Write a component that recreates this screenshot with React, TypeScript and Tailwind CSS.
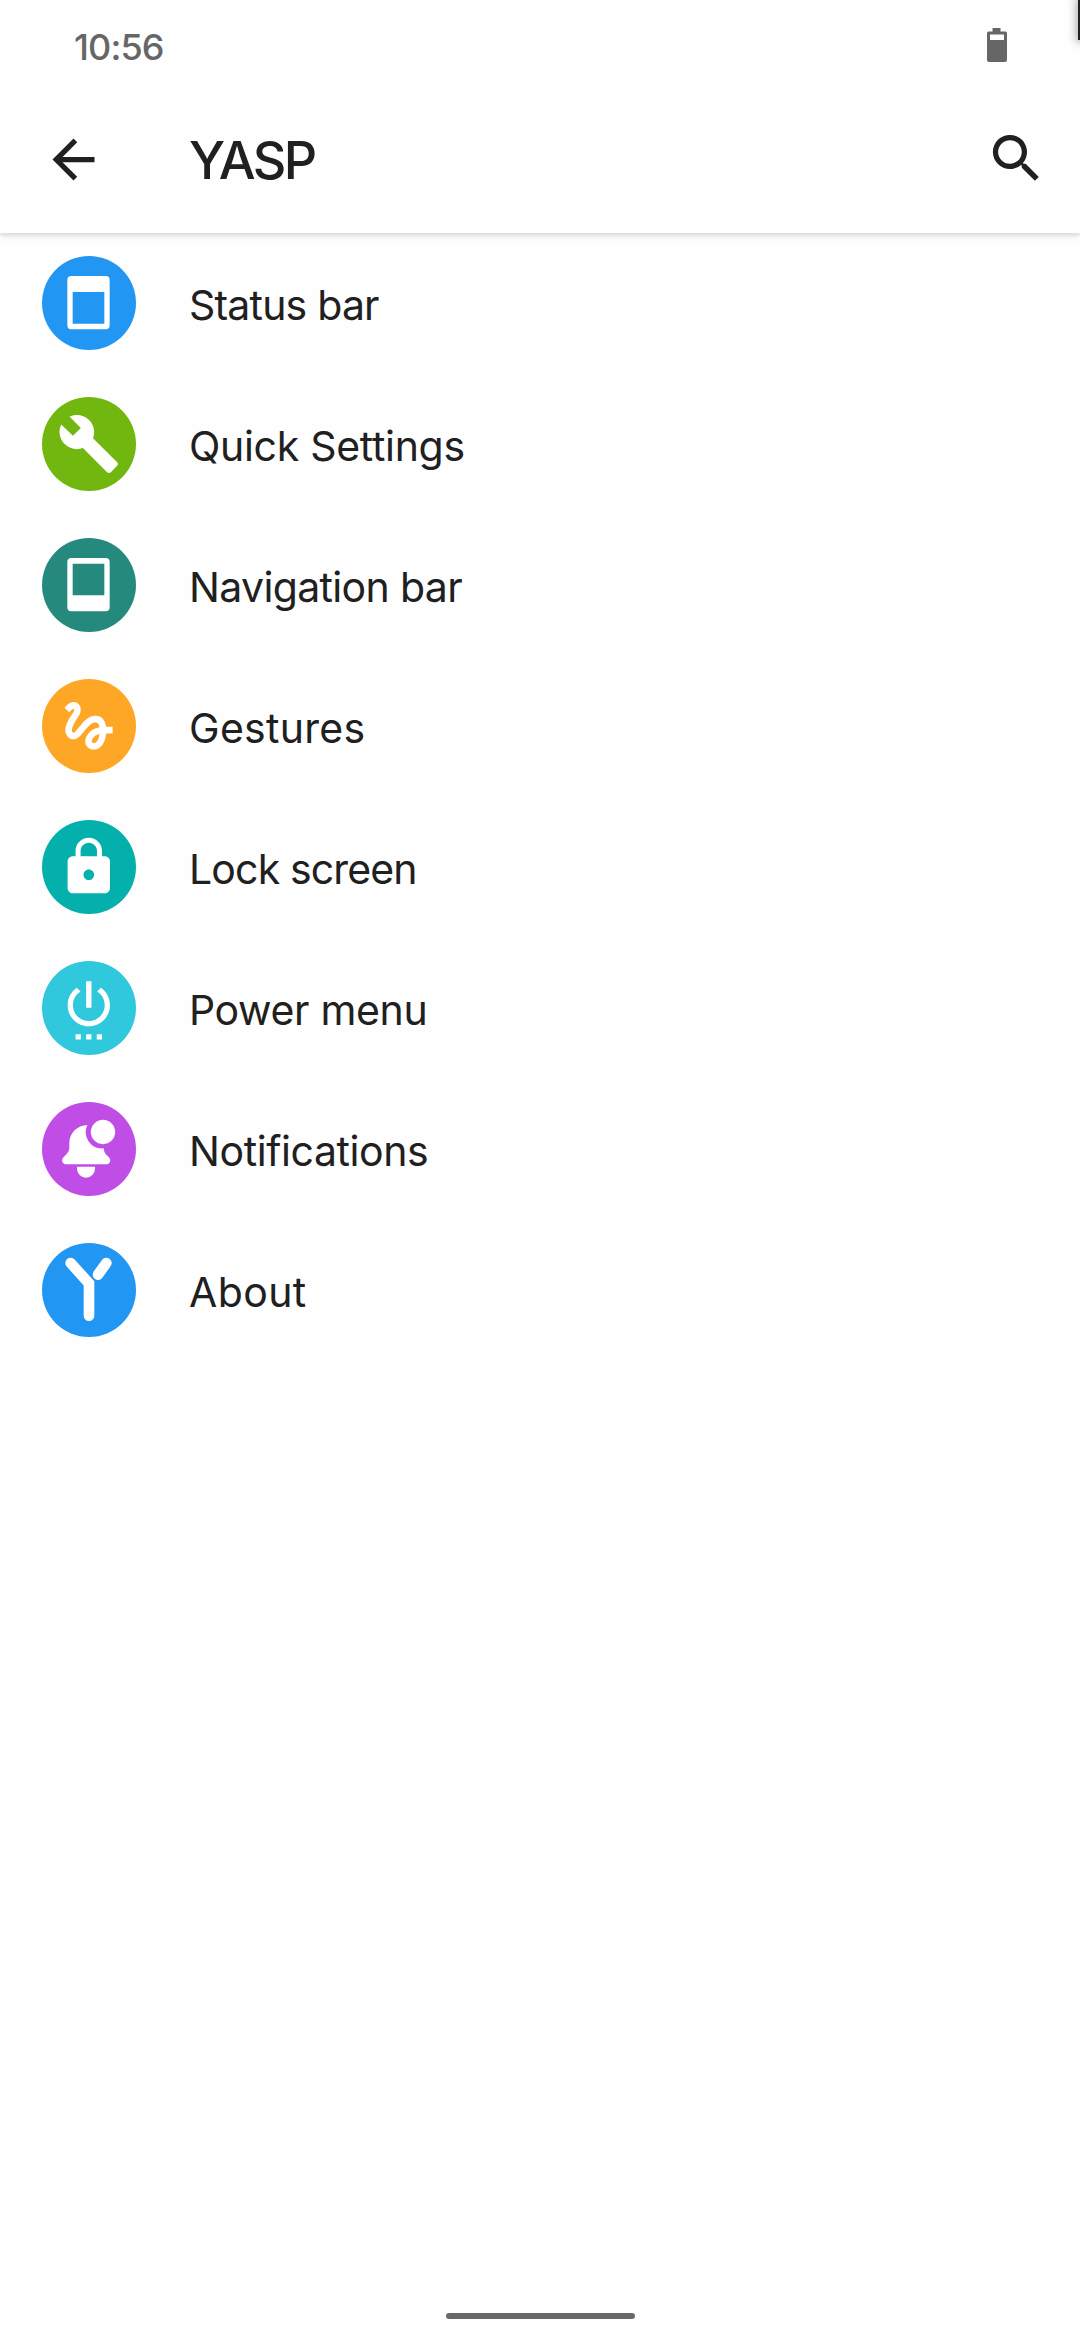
import type { ReactNode } from "react";
import { MdArrowBack, MdBuild, MdGesture, MdLock, MdSearch, MdSettingsPower } from "react-icons/md";

const glyph = "mr-px size-[63.6px] text-white";

function StatusBarIcon() {
  return (
    <svg viewBox="0 0 282 282" className="size-full" fill="#fff">
      <path fillRule="evenodd" d="M88 60H191a12 12 0 0 1 12 12V208a12 12 0 0 1-12 12H88a12 12 0 0 1-12-12V72a12 12 0 0 1 12-12ZM92 108V203H187V108Z" />
    </svg>
  );
}

function NavigationBarIcon() {
  return (
    <svg viewBox="0 0 282 282" className="size-full" fill="#fff">
      <path fillRule="evenodd" d="M88 60H191a12 12 0 0 1 12 12V208a12 12 0 0 1-12 12H88a12 12 0 0 1-12-12V72a12 12 0 0 1 12-12ZM92 77V172H187V77Z" />
    </svg>
  );
}

function BellIcon() {
  return (
    <svg viewBox="0 0 282 282" className="size-full" fill="#fff">
      <path d="M136 69C106 70 82 92 82 124V138Q82 148 74 156L65 165C56 174 61 187 73 187H192C205 187 209 174 200 165L191 156Q186 150 185 139A49 49 0 0 1 136 69Z" />
      <circle cx="183" cy="90" r="36.5" />
      <path d="M105 194H159V200A27 27 0 0 1 105 200Z" />
    </svg>
  );
}

function YaspIcon() {
  return (
    <svg viewBox="0 0 282 282" className="size-full" fill="none" stroke="#fff" strokeWidth="32" strokeLinecap="round">
      <path d="M86 60L141 121V218" />
      <path d="M193 60L168 95" />
    </svg>
  );
}

interface Item {
  label: string;
  color: string;
  tracking: string;
  icon: ReactNode;
}

const items: Item[] = [
  { label: "Status bar", color: "bg-[#2196f3]", tracking: "tracking-[-0.8px]", icon: <StatusBarIcon /> },
  { label: "Quick Settings", color: "bg-[#72b70f]", tracking: "tracking-[-0.3px]", icon: <MdBuild className={glyph} /> },
  { label: "Navigation bar", color: "bg-[#26897d]", tracking: "tracking-[-0.65px]", icon: <NavigationBarIcon /> },
  { label: "Gestures", color: "bg-[#fea726]", tracking: "tracking-[0.3px]", icon: <MdGesture className={glyph} /> },
  { label: "Lock screen", color: "bg-[#03b0ac]", tracking: "tracking-[-0.85px]", icon: <MdLock className={glyph} /> },
  { label: "Power menu", color: "bg-[#30c8dc]", tracking: "tracking-[-0.35px]", icon: <MdSettingsPower className={glyph} /> },
  { label: "Notifications", color: "bg-[#bf4de6]", tracking: "tracking-[-0.4px]", icon: <BellIcon /> },
  { label: "About", color: "bg-[#2196f3]", tracking: "tracking-[0.4px]", icon: <YaspIcon /> },
];

export default function App() {
  return (
    <div className="relative flex h-[2340px] w-[1080px] flex-col overflow-hidden bg-[#fefefe] font-['Inter',sans-serif] text-[#202020]">
      <div className="absolute -right-[18px] top-0 h-10 w-5 bg-[#222] shadow-[0_0_8px_2px_rgba(0,0,0,0.3)]" />
      <header className="flex h-[233px] shrink-0 flex-col shadow-[0_3px_3px_0_rgba(0,0,0,0.1),0_6px_8px_0_rgba(0,0,0,0.03)]">
        <div className="flex h-[92px] items-center justify-between pl-[74px] pr-[73px] text-[#666]">
          <span className="pt-0.5 text-[36px] font-medium leading-none tracking-[-0.9px]">10:56</span>
          <svg viewBox="0 0 20 34" className="mb-0.5 h-[34px] w-5" fill="#666">
            <path fillRule="evenodd" d="M5.500 0h8v3.500H18.500a1.500 1.500 0 0 1 1.500 1.500V32a2 2 0 0 1-2 2H2a2 2 0 0 1-2-2V5a1.500 1.500 0 0 1 1.500-1.500H5.500ZM3 6.500V12H17V6.500Z" />
          </svg>
        </div>
        <div className="flex h-[135px] items-center pl-[42px] pr-8">
          <MdArrowBack className="size-[63px]" />
          <h1 className="ml-[84px] flex-1 pt-[3px] text-[52px] font-medium leading-none tracking-[-2.6px]">YASP</h1>
          <MdSearch className="mb-[3px] size-[63px]" />
        </div>
      </header>
      <main className="flex flex-1 flex-col gap-[47px] pt-[23px]">
        {items.map((item) => (
          <div key={item.label} className="flex h-[94px] items-center pl-[42px]">
            <div className={`flex size-[94px] shrink-0 items-center justify-center rounded-full ${item.color}`}>{item.icon}</div>
            <span className={`ml-[53px] whitespace-nowrap pt-[5px] text-[41px] leading-none ${item.tracking}`}>{item.label}</span>
          </div>
        ))}
      </main>
      <footer className="flex justify-center pb-[21px]">
        <div className="h-1.5 w-[189px] rounded-full bg-[#686868]" />
      </footer>
    </div>
  );
}
